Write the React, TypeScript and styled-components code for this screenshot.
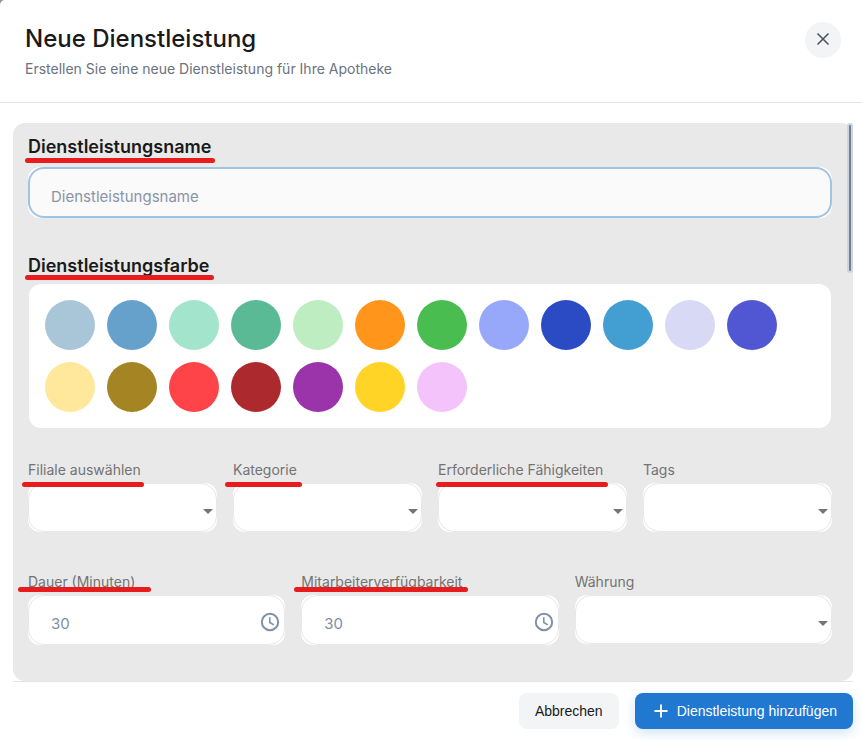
import React from "react";
import styled, { createGlobalStyle } from "styled-components";
import { Plus, X } from "lucide-react";

const GlobalStyle = createGlobalStyle`
  *, *::before, *::after { box-sizing: border-box; }
  html { background: #8f939c; }
  body { margin: 0; font-family: Inter, "Liberation Sans", sans-serif; color: #1a1a1a; }
  button, input, select { font: inherit; }
`;

const Dialog = styled.main`
  display: flex;
  flex-direction: column;
  min-height: 100vh;
  background: #fff;
  border-top-left-radius: 5px;
`;

const Header = styled.header`
  display: flex;
  align-items: flex-start;
  justify-content: space-between;
  padding: 22px 21px 23px 25px;
  border-bottom: 1px solid #e5e5e5;
`;

const Title = styled.h1`
  margin: 0 0 3px;
  font-size: 24px;
  line-height: 34px;
  font-weight: 500;
`;

const Subtitle = styled.p`
  margin: 0;
  font-size: 14px;
  line-height: 20px;
  color: #6b7280;
`;

const CloseButton = styled.button`
  display: grid;
  place-items: center;
  width: 36px;
  height: 36px;
  padding: 0 0 2px;
  border: 0;
  border-radius: 50%;
  background: #f3f4f6;
  color: #475563;
  cursor: pointer;
`;

const Form = styled.form`
  display: flex;
  flex: 1;
  flex-direction: column;
  padding: 20px 9px 11px 13px;
`;

const Panel = styled.div`
  display: flex;
  flex: 1;
  align-items: flex-start;
  background: #e9e9e9;
  border-radius: 12px;
`;

const PanelBody = styled.div`
  flex: 1;
  min-width: 0;
  padding: 12px 15px 36px;
`;

const ScrollThumb = styled.div`
  width: 6px;
  height: 150px;
  border: 2px solid #cbd5e1;
  border-radius: 3px;
  background: #718096;
`;

const Section = styled.div<{ $gap: number }>`
  display: flex;
  flex-direction: column;
  align-items: stretch;
  gap: ${(p) => p.$gap}px;
`;

const ColorSection = styled.fieldset`
  margin: 36px 0 32px;
  padding: 0;
  border: 0;
  min-width: 0;
`;

const LargeLabel = styled.label`
  position: relative;
  align-self: flex-start;
  font-size: 18px;
  line-height: 24px;
  font-weight: 600;
`;

const ColorLegend = styled.legend`
  position: relative;
  margin-bottom: 6px;
  padding: 0;
  font-size: 18px;
  line-height: 24px;
  font-weight: 600;
`;

const SmallLabel = styled.label`
  position: relative;
  align-self: flex-start;
  font-size: 14px;
  line-height: 20px;
  color: #737373;
`;

const Marker = styled.span<{ $top: number; $left: number; $right: number }>`
  position: absolute;
  z-index: 1;
  top: ${(p) => p.$top}px;
  left: ${(p) => -p.$left}px;
  right: ${(p) => -p.$right}px;
  height: 5px;
  border-radius: 3px;
  background: #e81c1c;
`;

const ControlFrame = styled.div`
  display: grid;
  align-items: center;
  background: #fff;
  border-radius: 12px;

  & > * { grid-area: 1 / 1; }
`;

const NameInput = styled.input`
  width: 100%;
  height: 51px;
  padding: 8px 21px 0;
  border: 2px solid #a0c4e4;
  border-radius: 16px;
  background: #fafafa;
  font-size: 15px;
  outline: none;

  &::placeholder { color: #8a94a9; opacity: 1; }
`;

const DurationInput = styled.input`
  width: 100%;
  height: 50px;
  padding: 6px 44px 0 22px;
  border: 1px solid #e8e8eb;
  border-radius: 16px;
  background: #fff;
  font-size: 15px;
  color: #7f8ea6;
  outline: none;
`;

const Select = styled.select`
  width: 100%;
  height: 49px;
  padding: 6px 28px 0 22px;
  border: 1px solid #e8e8eb;
  border-radius: 16px;
  background: #fff;
  appearance: none;
  outline: none;
`;

const Arrow = styled.svg`
  justify-self: end;
  margin: 7px 4px 0 0;
  pointer-events: none;
`;

const Clock = styled.svg`
  justify-self: end;
  margin: 4px 5px 0 0;
  fill: none;
  stroke: #7f90a9;
  stroke-width: 2;
  pointer-events: none;
`;

const Swatches = styled.div`
  display: flex;
  flex-wrap: wrap;
  gap: 12px;
  margin: 0 1px;
  padding: 16px;
  background: #fff;
  border-radius: 12px;
`;

const Swatch = styled.button<{ $color: string }>`
  width: 50px;
  height: 50px;
  padding: 0;
  border: 0;
  border-radius: 50%;
  background: ${(p) => p.$color};
  cursor: pointer;
`;

const Fields = styled.div<{ $columns: number }>`
  display: grid;
  grid-template-columns: repeat(${(p) => p.$columns}, minmax(0, 1fr));
  align-items: start;
  gap: 16px;

  & + & { margin-top: 40px; }
`;

const Footer = styled.footer`
  display: flex;
  justify-content: flex-end;
  gap: 16px;
  padding-top: 11px;
  border-top: 1px solid #e5e5e5;
`;

const ActionButton = styled.button<{ $primary?: boolean }>`
  display: flex;
  align-items: center;
  gap: 6px;
  height: 36px;
  padding: 0 16px;
  border: 0;
  border-radius: 8px;
  background: ${(p) => (p.$primary ? "#2078d1" : "#f3f4f6")};
  color: ${(p) => (p.$primary ? "#fff" : "#1a1a1a")};
  box-shadow: ${(p) => (p.$primary ? "0 4px 12px rgba(32, 120, 209, 0.2)" : "none")};
  font-family: "Liberation Sans", Arial, sans-serif;
  font-size: 14px;
  cursor: pointer;
`;

const colors = [
  "#a9c5d8", "#65a1cb", "#a3e4cc", "#5aba96", "#beedc1", "#ff961b",
  "#49bd4f", "#97a8fb", "#2b4bc5", "#439ed1", "#d8d9f5", "#5157d3",
  "#ffe79b", "#a58523", "#ff4449", "#ac2a2e", "#9b34aa", "#ffd426", "#f5c3fc",
];

type Mark = { top: number; left: number; right: number };
type FieldProps = { id: string; label: string; mark?: Mark; kind?: "select" | "duration" };

function Underline({ top, left, right }: Mark) {
  return <Marker $top={top} $left={left} $right={right} />;
}

function Field({ id, label, mark, kind = "select" }: FieldProps) {
  return (
    <Section $gap={3}>
      <SmallLabel htmlFor={id}>
        {label}
        {mark && <Underline {...mark} />}
      </SmallLabel>
      <ControlFrame>
        {kind === "select" ? (
          <>
            <Select id={id} defaultValue="">
              <option value="" />
            </Select>
            <Arrow width="10" height="5" viewBox="0 0 10 5" aria-hidden="true">
              <path d="M0 0h10L5 5z" fill="#757575" />
            </Arrow>
          </>
        ) : (
          <>
            <DurationInput id={id} type="text" inputMode="numeric" defaultValue="30" />
            <Clock width="20" height="20" viewBox="0 0 20 20" aria-hidden="true">
              <circle cx="10" cy="10" r="8.2" />
              <path d="M9.8 5.3v5.2l4 2.4" strokeWidth="1.6" />
            </Clock>
          </>
        )}
      </ControlFrame>
    </Section>
  );
}

export default function App() {
  return (
    <>
      <GlobalStyle />
      <Dialog>
        <Header>
          <div>
            <Title>Neue Dienstleistung</Title>
            <Subtitle>Erstellen Sie eine neue Dienstleistung für Ihre Apotheke</Subtitle>
          </div>
          <CloseButton type="button" aria-label="Schließen">
            <X size={20} strokeWidth={2} />
          </CloseButton>
        </Header>
        <Form onSubmit={(e) => e.preventDefault()}>
          <Panel>
            <PanelBody>
              <Section $gap={8}>
                <LargeLabel htmlFor="name">
                  Dienstleistungsname
                  <Underline top={23} left={3} right={4} />
                </LargeLabel>
                <ControlFrame>
                  <NameInput id="name" type="text" placeholder="Dienstleistungsname" />
                </ControlFrame>
              </Section>
              <ColorSection>
                <ColorLegend>
                  Dienstleistungsfarbe
                  <Underline top={21} left={3} right={5} />
                </ColorLegend>
                <Swatches>
                  {colors.map((color) => (
                    <Swatch key={color} type="button" $color={color} aria-label={color} />
                  ))}
                </Swatches>
              </ColorSection>
              <Fields $columns={4}>
                <Field id="branch" label="Filiale auswählen" mark={{ top: 22, left: 6, right: 3 }} />
                <Field id="category" label="Kategorie" mark={{ top: 22, left: 8, right: 5 }} />
                <Field id="skills" label="Erforderliche Fähigkeiten" mark={{ top: 22, left: 2, right: 5 }} />
                <Field id="tags" label="Tags" />
              </Fields>
              <Fields $columns={3}>
                <Field id="duration" kind="duration" label="Dauer (Minuten)" mark={{ top: 15, left: 10, right: 16 }} />
                <Field id="availability" kind="duration" label="Mitarbeiterverfügbarkeit" mark={{ top: 15, left: 7, right: 6 }} />
                <Field id="currency" label="Währung" />
              </Fields>
            </PanelBody>
            <ScrollThumb />
          </Panel>
          <Footer>
            <ActionButton type="button">Abbrechen</ActionButton>
            <ActionButton type="submit" $primary>
              <Plus size={20} strokeWidth={2.2} aria-hidden="true" />
              Dienstleistung hinzufügen
            </ActionButton>
          </Footer>
        </Form>
      </Dialog>
    </>
  );
}
